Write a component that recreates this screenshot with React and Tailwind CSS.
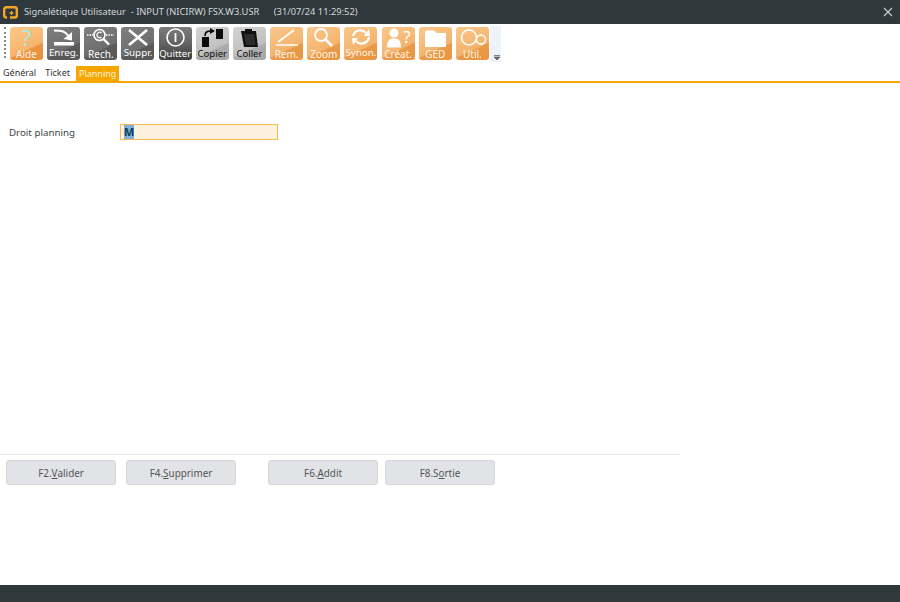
import React from "react";

const font = "font-['Noto_Sans','Open_Sans',sans-serif]";

const icons = {
  aide: (
    <text x="16.5" y="19" textAnchor="middle" fontSize="22" fontFamily="Noto Sans, sans-serif" fill="#a8ebe6">?</text>
  ),
  enreg: (
    <g fill="none" stroke="#fff">
      <path d="M7 3.5 C14 3.5 18 4 21 8.5" strokeWidth="2" />
      <path d="M25 5 L25 13.5 L16.5 12 Z" fill="#fff" stroke="none" />
      <rect x="7" y="15" width="20" height="3.5" fill="#fff" stroke="none" />
    </g>
  ),
  rech: (
    <g fill="none" stroke="#fff">
      <circle cx="15.5" cy="8" r="5.5" strokeWidth="1.6" />
      <path d="M19.5 12 L25 17.5" strokeWidth="2.4" />
      <path d="M3 8 H9 M22 8 H30" strokeWidth="1.5" strokeDasharray="1.5 1" />
      <path d="M17.5 6 A2.7 2.7 0 1 0 17.5 10" strokeWidth="1.1" />
    </g>
  ),
  suppr: <path d="M8 3 L26 18 M26 3 L8 18" stroke="#fff" strokeWidth="2.6" fill="none" />,
  quitter: (
    <g fill="none" stroke="#fff">
      <circle cx="16.5" cy="10.5" r="8.5" strokeWidth="1.6" />
      <path d="M16.5 6 V15" strokeWidth="1.8" />
    </g>
  ),
  copier: (
    <g fill="#0b0b0b">
      <rect x="6" y="10" width="7" height="10" />
      <rect x="20" y="2" width="7" height="10" />
      <path d="M9 9 C9 5 11 4 15 4" fill="none" stroke="#0b0b0b" strokeWidth="1.6" />
      <path d="M14 1 L19 4 L14 7 Z" />
    </g>
  ),
  coller: (
    <g>
      <path d="M8 4 H23 L25 20 H11 Z" fill="#111" />
      <rect x="12" y="2" width="7" height="4" fill="#111" />
      <path d="M11 7 H21 L22.5 18 H13 Z" fill="#2c2c2c" />
    </g>
  ),
  rem: (
    <g fill="none" stroke="#fff">
      <path d="M8 15 L24 3" strokeWidth="1.8" />
      <path d="M6 18 H28" strokeWidth="1.6" />
    </g>
  ),
  zoom: (
    <g fill="none" stroke="#fff">
      <circle cx="14" cy="8" r="6" strokeWidth="1.8" />
      <path d="M18.5 12.5 L25 19" strokeWidth="2.6" />
    </g>
  ),
  synon: (
    <g fill="none" stroke="#fff" strokeWidth="2.2">
      <path d="M9 9 A7.5 7.5 0 0 1 22 6" />
      <path d="M25 10 A7.5 7.5 0 0 1 12 14" />
      <path d="M20 9 L26 9 L25 2 Z" fill="#fff" stroke="none" />
      <path d="M14 11 L8 11 L9 18 Z" fill="#fff" stroke="none" />
    </g>
  ),
  creat: (
    <g fill="#fff">
      <circle cx="12" cy="6" r="4.5" />
      <path d="M5 20.5 C5 13 8 11.5 12 11.5 C16 11.5 19 13 19 20.5 Z" />
      <text x="25" y="16" textAnchor="middle" fontSize="17" fontFamily="Noto Sans, sans-serif">?</text>
    </g>
  ),
  ged: <path d="M6 5 Q6 3.5 8 3.5 H15 L18 6 H27 V20 H6 Z" fill="#fff" />,
  util: (
    <g fill="none" stroke="#fff" strokeWidth="1.5">
      <circle cx="13" cy="10.5" r="7.5" />
      <circle cx="25" cy="12.5" r="4.5" />
    </g>
  ),
};

const toolbar = [
  { id: "aide", label: "Aide", tone: "bright", labelClass: "text-[10px]" },
  { id: "enreg", label: "Enreg.", tone: "gray", labelClass: "text-[9.8px] -mt-[1px]" },
  { id: "rech", label: "Rech.", tone: "gray", labelClass: "text-[10px]" },
  { id: "suppr", label: "Suppr.", tone: "gray", labelClass: "text-[9.8px] -mt-[1px]" },
  { id: "quitter", label: "Quitter", tone: "dark", labelClass: "text-[9.5px]" },
  { id: "copier", label: "Copier", tone: "light", labelClass: "text-[9.5px]" },
  { id: "coller", label: "Coller", tone: "light", labelClass: "text-[9.5px]" },
  { id: "rem", label: "Rem.", tone: "orange", labelClass: "text-[10px]" },
  { id: "zoom", label: "Zoom", tone: "orange", labelClass: "text-[10px]" },
  { id: "synon", label: "Synon.", tone: "orange", labelClass: "text-[9.8px] -mt-[1px]" },
  { id: "creat", label: "Créat.", tone: "orange", labelClass: "text-[10px]" },
  { id: "ged", label: "GED", tone: "orange", labelClass: "text-[10px]" },
  { id: "util", label: "Util.", tone: "orange", labelClass: "text-[10px]" },
];

const tones = {
  bright: "bg-[linear-gradient(155deg,#fcc98a_0%,#f7b56c_62%,#ea9340_66%,#e8913c_100%)] text-[#fff5e8]",
  orange: "bg-[linear-gradient(155deg,#f9c88c_0%,#f4b46e_62%,#e99a4a_66%,#e8963f_100%)] text-[#fff5e8]",
  gray: "bg-[linear-gradient(155deg,#808080_0%,#6e6e6e_62%,#5a5a5a_66%,#585858_100%)] text-white",
  dark: "bg-gradient-to-b from-[#7c7c7c] via-[#636363] to-[#3f3f3f] text-white",
  light: "bg-[linear-gradient(155deg,#d4d4d4_0%,#c0c0c0_62%,#ababab_66%,#a8a8a8_100%)] text-[#111]",
};

function ToolButton({ id, label, tone, labelClass }) {
  return (
    <div className={`w-[33px] h-[33px] rounded-[3px] overflow-hidden flex flex-col items-center shrink-0 ${tones[tone]}`}>
      <svg width="33" height="21" viewBox="0 0 33 21" className="shrink-0">
        {icons[id]}
      </svg>
      <span className={`leading-[12px] whitespace-nowrap ${labelClass}`}>{label}</span>
    </div>
  );
}

function FooterButton({ prefix, letter, rest }) {
  return (
    <button className="w-[110px] h-[25px] pt-[1px] rounded-[3px] bg-[#e1e3e7] border border-[#d3d5d9] text-[9.9px] text-[#555] flex items-center justify-center">
      {prefix}
      <u>{letter}</u>
      {rest}
    </button>
  );
}

export default function App() {
  return (
    <div className={`w-[900px] h-[602px] bg-white flex flex-col overflow-hidden ${font}`}>
      {/* title bar */}
      <div className="h-6 shrink-0 bg-[#2f383d] flex items-center pl-[3px] pr-[7px] text-[9.3px] text-[#d5d8da]">
        <svg width="15" height="13" viewBox="0 0 15 13" className="shrink-0">
          <path d="M4 11.5 H3.5 Q1.2 11.5 1.2 9.5 V3.5 Q1.2 1.3 3.5 1.3 H11.5 Q13.8 1.3 13.8 3.5 V9.5 Q13.8 11.5 11.5 11.5 H7" fill="none" stroke="#f5a623" strokeWidth="2.4" />
          <path d="M8.5 5 V9 M6.5 7 H10.5" stroke="#f5a623" strokeWidth="1.3" />
        </svg>
        <span className="ml-[6px] whitespace-pre">Signalétique Utilisateur  - INPUT (NICIRW) FSX.W3.USR      (31/07/24 11:29:52)</span>
        <svg width="10" height="10" viewBox="0 0 10 10" className="ml-auto">
          <path d="M1 1 L9 9 M9 1 L1 9" stroke="#c8cccf" strokeWidth="1.2" />
        </svg>
      </div>

      {/* toolbar */}
      <div className="h-[40px] shrink-0 flex items-start pt-[2px]">
        <div className="h-[36px] w-[501px] bg-[#eef3fb] flex">
          <div className="h-full flex items-start bg-white pl-[4px] pt-[1px]">
            <div className="w-[2px] h-[31px] mr-[4px] border-l-2 border-dotted border-[#888]" />
            <div className="flex gap-[4.17px] pr-[1px]">
              {toolbar.map((b) => (
                <ToolButton key={b.id} {...b} />
              ))}
            </div>
          </div>
          <svg width="6" height="6" viewBox="0 0 6 6" className="self-end ml-[4px] mb-[1px]">
            <path d="M0 0.5 H6 M0 2 H6 L3 5 Z" stroke="#666" strokeWidth="0.8" fill="#666" />
          </svg>
        </div>
      </div>

      {/* tabs */}
      <div className="h-[19px] shrink-0 flex items-end border-b-2 border-[#f7a600] pl-[3px] text-[9px] text-[#333]">
        <span className="h-[17px] leading-[17px] mr-[9px]">Général</span>
        <span className="h-[17px] leading-[17px] mr-[6px]">Ticket</span>
        <span className="h-[15px] leading-[15px] px-[3px] bg-[#f7a600] text-[#fff3dd]">Planning</span>
      </div>

      {/* form */}
      <div className="flex-1 flex flex-col">
        <div className="flex items-center mt-[41px] pl-[9px] h-4">
          <span className="w-[111px] pt-[2px] text-[9.75px] text-[#444]">Droit planning</span>
          <div className="w-[158px] h-4 bg-[#fdf1de] border border-[#f5bd50] pl-[3px] flex items-center">
            <span className="w-[10px] text-center bg-[#7fb1d8] text-[#0c3a5e] text-[11px] font-bold leading-[14px]">M</span>
          </div>
        </div>

        <div className="mt-auto mb-[100px] w-[680px] border-t border-[#e8e8e8] pt-[5px] pl-[6px] flex">
          <FooterButton prefix="F2." letter="V" rest="alider" />
          <div className="w-[10px]" />
          <FooterButton prefix="F4." letter="S" rest="upprimer" />
          <div className="w-[32px]" />
          <FooterButton prefix="F6." letter="A" rest="ddit" />
          <div className="w-[7px]" />
          <FooterButton prefix="F8.S" letter="o" rest="rtie" />
        </div>
      </div>

      {/* status bar */}
      <div className="h-[17px] shrink-0 bg-[#2f383d]" />
    </div>
  );
}
